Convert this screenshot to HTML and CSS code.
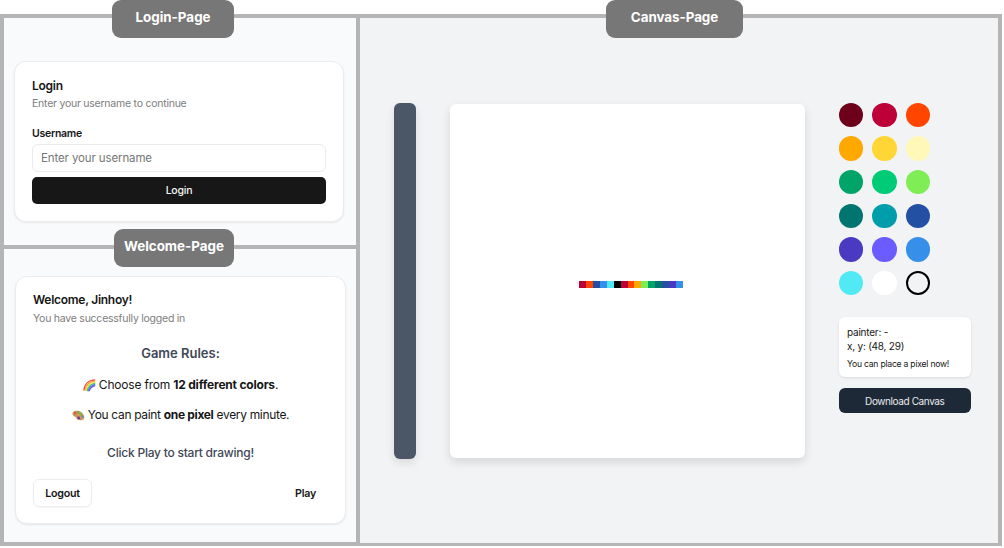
FILE: index.html
```html
<!DOCTYPE html>
<html lang="en">
<head>
<meta charset="utf-8">
<title>Pixel Canvas</title>
<link rel="stylesheet" href="styles.css">
</head>
<body>
<main class="board">
  <div class="sidebar">
    <section class="panel panel-login">
      <h2 class="tag tag-login">Login-Page</h2>
      <form class="card login-card">
        <h3 class="card-title">Login</h3>
        <p class="card-subtitle">Enter your username to continue</p>
        <label class="field-label" for="username">Username</label>
        <input class="field" id="username" type="text" placeholder="Enter your username">
        <button class="login-button" type="button">Login</button>
      </form>
    </section>
    <section class="panel panel-welcome">
      <h2 class="tag tag-welcome">Welcome-Page</h2>
      <div class="card welcome-card">
        <h3 class="card-title welcome-title">Welcome, Jinhoy!</h3>
        <p class="card-subtitle welcome-subtitle">You have successfully logged in</p>
        <h4 class="rules-title">Game Rules:</h4>
        <p class="rule">
          <svg class="emoji" viewBox="0 0 13 13" fill="none" stroke-width="1.3" aria-hidden="true">
            <path d="M.9 11.6C1.1 5.8 5 1.3 12.2.9" stroke="#ef4b43"/>
            <path d="M2 11.8C2.2 6.7 5.8 2.5 12.2 2.1" stroke="#fb9b38"/>
            <path d="M3.1 12C3.3 7.6 6.6 3.7 12.2 3.2" stroke="#f4df43"/>
            <path d="M4.2 12.1C4.4 8.5 7.3 4.9 12.2 4.3" stroke="#53c957"/>
            <path d="M5.3 12.2C5.5 9.3 8 6 12.2 5.4" stroke="#3e8df5"/>
            <path d="M6.3 12.3C6.5 10 8.7 7.1 12.2 6.5" stroke="#7656db"/>
          </svg>
          <span class="rule-text choose">Choose from <b>12 different colors</b>.</span>
        </p>
        <p class="rule">
          <svg class="emoji" viewBox="0 0 13 13" aria-hidden="true">
            <path d="M.8 3.5C2.2 1.4 6.4 1.3 9.2 3.2c2.6 1.8 3.7 4.7 2.7 6.5-1 1.7-4.1 1.8-6.5.9-1.3-.5-.5-1.9-1.8-2.7C2.2 7-.6 5.6.8 3.5Z" fill="#c79058"/>
            <circle cx="3" cy="4" r="1.2" fill="#e9533f"/>
            <circle cx="6" cy="3.4" r="1.2" fill="#55b947"/>
            <circle cx="9" cy="5" r="1.3" fill="#74bd48"/>
            <circle cx="10.4" cy="7.6" r="1.1" fill="#478dcf"/>
            <circle cx="6.9" cy="8.7" r="1.5" fill="#713b9f"/>
            <path d="m5 4.5 6.5 6.6" stroke="#e8ba57" stroke-width=".8"/>
          </svg>
          <span class="rule-text paint">You can paint <b>one pixel</b> every minute.</span>
        </p>
        <p class="prompt">Click Play to start drawing!</p>
        <div class="actions">
          <button class="action logout" type="button">Logout</button>
          <button class="action play" type="button">Play</button>
        </div>
      </div>
    </section>
  </div>
  <section class="workspace">
    <h2 class="tag tag-canvas">Canvas-Page</h2>
    <div class="toolbar"></div>
    <div class="canvas">
      <div class="pixels">
        <i class="crimson"></i><i class="vermilion"></i><i class="navy"></i><i class="blue"></i><i class="cyan"></i><i class="black"></i><i class="crimson"></i><i class="vermilion"></i><i class="orange"></i><i class="lime"></i><i class="green"></i><i class="teal"></i><i class="navy"></i><i class="indigo"></i><i class="blue"></i>
      </div>
    </div>
    <aside class="controls">
      <div class="palette">
        <i class="maroon"></i><i class="crimson"></i><i class="vermilion"></i>
        <i class="orange"></i><i class="yellow"></i><i class="cream"></i>
        <i class="green"></i><i class="emerald"></i><i class="lime"></i>
        <i class="teal"></i><i class="turquoise"></i><i class="navy"></i>
        <i class="indigo"></i><i class="violet"></i><i class="blue"></i>
        <i class="cyan"></i><i class="white"></i><i class="eraser"></i>
      </div>
      <div class="info">
        <p class="painter">painter: -</p>
        <p class="coords">x, y: (48, 29)</p>
        <p class="status"><span>You can place a pixel now!</span></p>
      </div>
      <button class="download" type="button">Download Canvas</button>
    </aside>
  </section>
</main>
</body>
</html>
```
FILE: styles.css
```css
* { box-sizing: border-box; }
body {
  margin: 0;
  height: 548px;
  overflow: hidden;
  background: #fff;
  color: #161616;
  font-family: Inter, "Liberation Sans", sans-serif;
}
h2, h3, h4, p { margin: 0; }
button, input { font-family: inherit; }

.board { display: flex; width: 1002px; padding-top: 14px; }
.sidebar { width: 360px; }
.panel {
  position: relative;
  padding: 0 10px;
  border: 4px solid #b5b5b5;
  background: #f9fafc;
}
.panel-login { height: 235px; padding-top: 43px; }
.panel-welcome { height: 297px; padding-top: 27px; border-top: 0; }

.tag {
  position: absolute;
  z-index: 2;
  height: 38px;
  border-radius: 9px;
  background: #777;
  color: #fff;
  font-size: 13.4px;
  font-weight: 700;
  line-height: 35px;
  text-align: center;
}
.tag-login { top: -18px; left: 108px; width: 122px; }
.tag-welcome { top: -20.5px; left: 110px; width: 120px; line-height: 34px; }
.tag-canvas { top: -18px; left: 246px; width: 137px; letter-spacing: -.05px; }

.card {
  display: flex;
  flex-direction: column;
  border: 1px solid #ececef;
  border-radius: 12px;
  background: #fff;
  box-shadow: 0 1px 2px rgba(0, 0, 0, .08);
}
.login-card { width: 330px; height: 161px; padding: 16px 17px; }
.card-title { font-size: 12px; font-weight: 600; line-height: 16px; letter-spacing: -.25px; }
.card-subtitle { margin-top: 2px; color: #7d7d7d; font-size: 10.5px; line-height: 16px; letter-spacing: -.24px; }
.field-label { margin-top: 14px; font-size: 10.5px; font-weight: 600; line-height: 15px; letter-spacing: -.27px; }
.field {
  height: 28px;
  margin-top: 3px;
  padding: 0 8px;
  border: 1px solid #ebebec;
  border-radius: 6px;
  background: #fff;
  font-size: 11.5px;
  letter-spacing: -.12px;
}
.field::placeholder { color: #767676; opacity: 1; }
.login-button {
  height: 27px;
  margin-top: 5px;
  padding: 0;
  border: 0;
  border-radius: 5px;
  background: #171717;
  color: #f5f5f5;
  font-size: 10.5px;
  font-weight: 500;
  letter-spacing: -.2px;
}

.welcome-card { width: 331px; height: 248px; margin-left: 1px; padding: 15px 17px; }
.welcome-title { letter-spacing: -.27px; }
.welcome-subtitle { margin-top: 3px; }
.rules-title { margin-top: 16px; color: #404756; font-size: 13px; font-weight: 600; line-height: 20px; text-align: center; }
.rule { display: flex; justify-content: center; align-items: center; gap: 3px; height: 18px; margin-top: 12px; font-size: 12px; line-height: 18px; }
.rules-title + .rule { margin-top: 13px; }
.choose { letter-spacing: -.2px; }
.paint { letter-spacing: -.33px; }
.emoji { width: 13px; height: 13px; flex: none; }
.prompt { margin-top: 20px; color: #404756; font-size: 12px; font-weight: 500; line-height: 18px; letter-spacing: -.23px; text-align: center; }
.actions { display: flex; justify-content: space-between; margin-top: 17px; }
.action { height: 28px; padding: 0; border: 0; border-radius: 6px; background: transparent; color: #161616; font-size: 10.7px; font-weight: 600; letter-spacing: -.23px; }
.logout { width: 59px; border: 1px solid #ededed; box-shadow: 0 1px 1px rgba(0, 0, 0, .04); }
.play { width: 45px; }

.workspace {
  position: relative;
  display: flex;
  width: 642px;
  height: 531.5px;
  padding: 85px 27px 0 34px;
  border: solid #b5b5b5;
  border-width: 4px 4px 3.5px 0;
  background: #f2f3f5;
}
.toolbar { width: 22px; height: 355.5px; border-radius: 6px; background: #4b5767; box-shadow: 0 4px 9px rgba(0, 0, 0, .1); }
.canvas {
  display: flex;
  align-items: center;
  justify-content: center;
  width: 355px;
  height: 354px;
  margin: 1px 0 0 34px;
  padding: 6px 0 0 7px;
  border-radius: 6px;
  background: #fff;
  box-shadow: 0 4px 10px rgba(0, 0, 0, .12);
}
.pixels { display: grid; grid-template-columns: repeat(15, 1fr); width: 104px; height: 7px; }
.controls { width: 132.5px; margin: -.5px 0 0 33.5px; }
.palette { display: grid; grid-template-columns: repeat(3, 24.5px); grid-auto-rows: 24.5px; gap: 9.2px; }
.palette i { border-radius: 50%; }
.info { height: 60px; margin-top: 22px; padding: 7.5px 8.5px; border-radius: 6px; background: #fff; box-shadow: 0 1px 3px rgba(0, 0, 0, .1); font-size: 10px; line-height: 14px; letter-spacing: -.22px; }
.status { margin-top: 4px; font-size: 8.6px; }
.download { display: block; width: 100%; height: 25px; margin-top: 11px; padding: 0; border: 0; border-radius: 6px; background: #1e2937; color: #e8eaed; font-size: 10px; letter-spacing: -.4px; }

.maroon { background: #6d001a; }
.crimson { background: #be0039; }
.vermilion { background: #ff4500; }
.orange { background: #ffa800; }
.yellow { background: #ffd635; }
.cream { background: #fff8b8; }
.green { background: #00a368; }
.emerald { background: #00cc78; }
.lime { background: #7eed56; }
.teal { background: #00756f; }
.turquoise { background: #009eaa; }
.navy { background: #2450a4; }
.indigo { background: #493ac1; }
.violet { background: #6a5cff; }
.blue { background: #3690ea; }
.cyan { background: #51e9f4; }
.white { background: #fff; }
.black { background: #000; }
.eraser { border: 2px solid #000; }
```
